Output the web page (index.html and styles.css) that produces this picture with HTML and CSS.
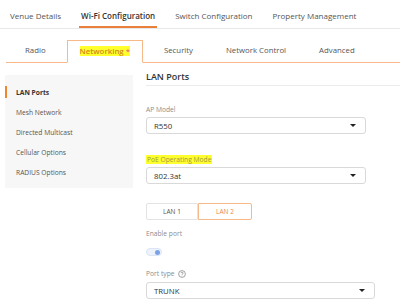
FILE: index.html
```html
<!DOCTYPE html>
<html>
<head>
<meta charset="utf-8">
<link rel="stylesheet" href="styles.css">
</head>
<body>
<div class="topnav">
  <div class="ttab">Venue Details</div>
  <div class="ttab active">Wi-Fi Configuration</div>
  <div class="ttab">Switch Configuration</div>
  <div class="ttab">Property Management</div>
</div>
<div class="subnav">
  <div class="stab">Radio</div>
  <div class="stab active"><span class="hl">Networking <span class="star">*</span></span></div>
  <div class="stab">Security</div>
  <div class="stab">Network Control</div>
  <div class="stab">Advanced</div>
</div>
<div class="main">
  <div class="side">
    <div class="sitem active">LAN Ports</div>
    <div class="sitem">Mesh Network</div>
    <div class="sitem">Directed Multicast</div>
    <div class="sitem">Cellular Options</div>
    <div class="sitem">RADIUS Options</div>
  </div>
  <div class="content">
    <div class="heading">LAN Ports</div>
    <div class="label l-first">AP Model</div>
    <div class="select"><span>R550</span><span class="caret"></span></div>
    <div class="label l-gap"><span class="hl2">PoE Operating Mode</span></div>
    <div class="select"><span>802.3at</span><span class="caret"></span></div>
    <div class="seg">
      <div class="segb">LAN 1</div>
      <div class="segb on">LAN 2</div>
    </div>
    <div class="label l-enable">Enable port</div>
    <div class="toggle"><span class="knob"></span></div>
    <div class="label l-port">Port type
      <svg class="help" width="8" height="8" viewBox="0 0 8 8"><circle cx="4" cy="4" r="3.4" fill="none" stroke="#8c8c8c" stroke-width="0.8"/><path d="M2.8 3.1 C2.8 1.9 5.2 1.9 5.2 3.1 C5.2 3.9 4 3.9 4 4.8" fill="none" stroke="#8c8c8c" stroke-width="0.8"/><circle cx="4" cy="5.9" r="0.45" fill="#8c8c8c"/></svg>
    </div>
    <div class="select wide"><span>TRUNK</span><span class="caret"></span></div>
  </div>
</div>
</body>
</html>
```

FILE: styles.css
```css
* { box-sizing: border-box; }
body {
  margin: 0;
  font-family: "Open Sans", "Noto Sans", sans-serif;
  color: #444;
  background: #fff;
  width: 400px;
  height: 305px;
  overflow: hidden;
}
.topnav {
  display: flex;
  gap: 16px;
  height: 29px;
  padding-left: 8px;
  border-bottom: 1px solid #e8e8e8;
}
.ttab {
  height: 28px;
  padding: 10px 2px 0;
  font-size: 8px;
  line-height: 12px;
  color: #555;
  white-space: nowrap;
}
.ttab.active {
  color: #333;
  font-weight: 600;
  box-shadow: inset 0 -2px 0 #e8803a;
}
.subnav {
  display: flex;
  align-items: flex-end;
  gap: 9px;
  margin: 11px 0 0 6px;
  height: 23px;
  padding-left: 7px;
  border-bottom: 1px solid #f7b98a;
}
.stab {
  height: 22px;
  line-height: 21px;
  padding: 0 12px;
  font-size: 7.8px;
  color: #555;
  white-space: nowrap;
}
.stab.active {
  height: 23px;
  margin-bottom: -1px;
  border: 1px solid #f7b98a;
  border-bottom-color: #fff;
  background: #fff;
  line-height: 20px;
}
.hl {
  background: #ffff2e;
  color: #d08a1a;
  font-weight: 600;
}
.star { color: #e8707a; }
.main {
  display: flex;
  align-items: flex-start;
  padding: 7px 0 0 5px;
}
.side {
  width: 128px;
  margin-top: 5px;
  padding: 7px 0 6px;
  background: #f7f7f7;
}
.sitem {
  display: flex;
  align-items: center;
  height: 20px;
  padding-left: 11px;
  font-size: 6.7px;
  color: #555;
}
.sitem.active {
  padding-left: 0;
  font-weight: 700;
  color: #333;
}
.sitem.active::before {
  content: "";
  width: 2px;
  height: 12px;
  margin-right: 9px;
  background: #f0862f;
}
.content {
  flex: 1;
  margin-left: 13px;
}
.heading {
  height: 16px;
  line-height: 14px;
  font-size: 9px;
  font-weight: 600;
  color: #333;
  border-bottom: 1px solid #ececec;
}
.label {
  height: 10px;
  line-height: 10px;
  font-size: 6.7px;
  color: #8c8c8c;
  display: flex;
  align-items: center;
}
.l-first { margin-top: 19px; margin-bottom: 2px; }
.l-gap { margin-top: 20px; margin-bottom: 3px; }
.hl2 {
  background: #ffff2e;
  color: #9a9a40;
  padding: 0 1px;
  line-height: 9px;
}
.select {
  display: flex;
  align-items: center;
  justify-content: space-between;
  width: 220px;
  height: 17px;
  padding: 0 9px 0 7px;
  border: 1px solid #d9d9d9;
  border-radius: 3px;
  font-size: 7.8px;
  color: #333;
  background: #fff;
}
.select.wide { width: 229px; }
.caret {
  width: 0;
  height: 0;
  border-left: 3px solid transparent;
  border-right: 3px solid transparent;
  border-top: 3.5px solid #222;
}
.seg {
  display: flex;
  margin-top: 19px;
}
.segb {
  width: 52px;
  height: 17px;
  line-height: 15px;
  text-align: center;
  font-size: 6.5px;
  color: #555;
  border: 1px solid #e3e3e3;
  border-radius: 2px 0 0 2px;
}
.segb.on {
  width: 54px;
  color: #ee8a3c;
  border: 1px solid #f7b98a;
  border-radius: 0 2px 2px 0;
}
.l-enable { margin-top: 9px; }
.toggle {
  display: flex;
  justify-content: flex-end;
  align-items: center;
  width: 16px;
  height: 8px;
  margin-top: 9px;
  padding: 0 1.5px;
  border: 1px solid #dbe5f5;
  border-radius: 4px;
  background: #eef3fb;
}
.knob {
  width: 5px;
  height: 5px;
  border-radius: 50%;
  background: #7aa2e6;
}
.l-port { margin-top: 13px; margin-bottom: 3px; gap: 4px; }
.help { display: block; }
```
